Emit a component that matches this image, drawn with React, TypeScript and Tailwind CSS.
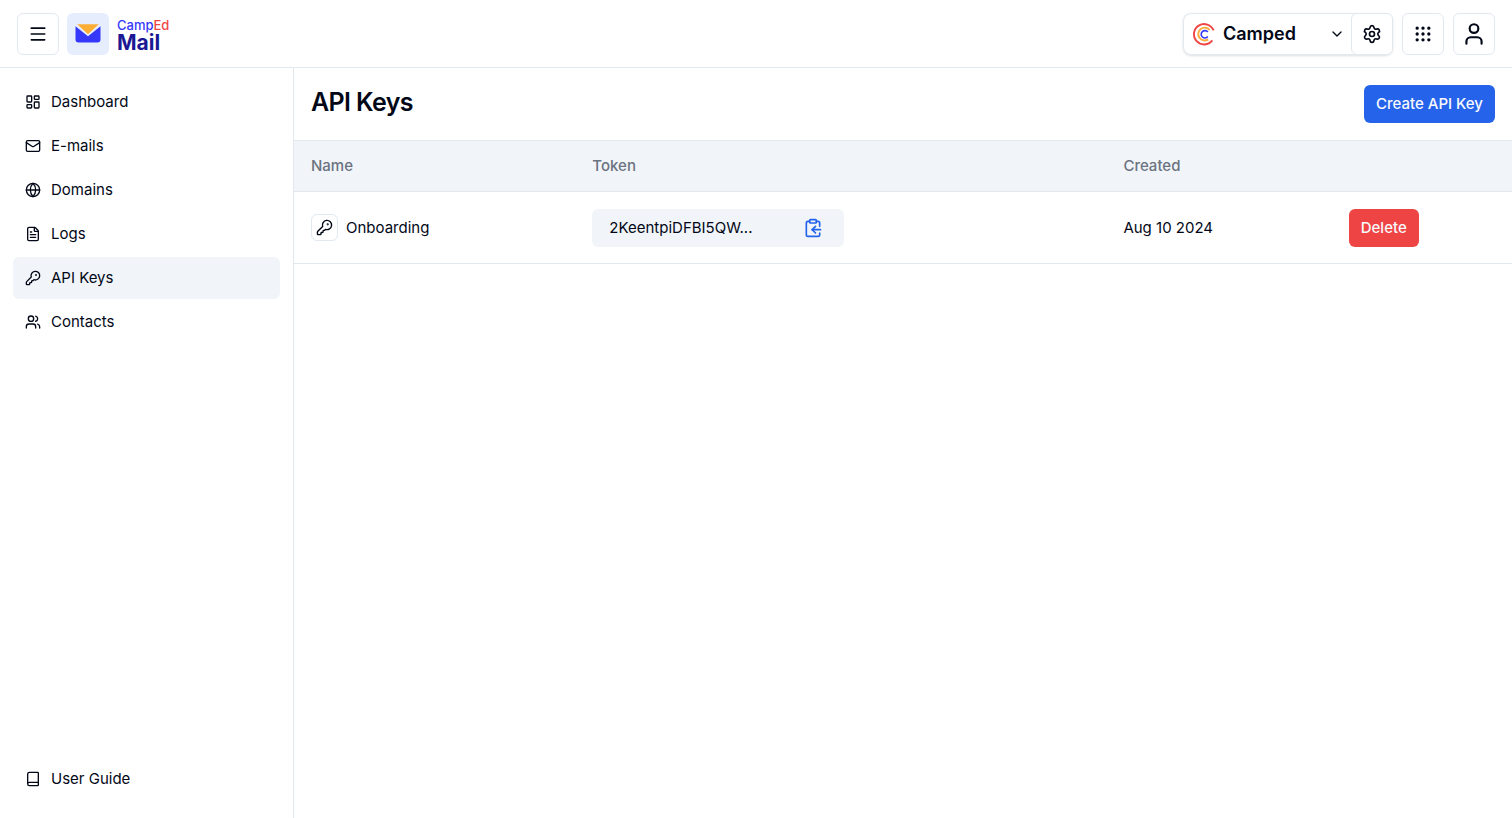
import {
  Book,
  ChevronDown,
  FileText,
  Globe,
  Grip,
  KeyRound,
  LayoutDashboard,
  Mail,
  Menu,
  Settings,
  User,
  Users,
} from "lucide-react";

const navItems = [
  { label: "Dashboard", icon: LayoutDashboard },
  { label: "E-mails", icon: Mail },
  { label: "Domains", icon: Globe },
  { label: "Logs", icon: FileText },
  { label: "API Keys", icon: KeyRound, active: true },
  { label: "Contacts", icon: Users },
];

const apiKeys = [
  { name: "Onboarding", token: "2KeentpiDFBI5QW...", created: "Aug 10 2024" },
];

const iconButton =
  "flex size-[42px] items-center justify-center rounded-md border border-[#e2e8f0] bg-white";

function MailLogo() {
  return (
    <svg viewBox="0 0 26 19" className="h-[19px] w-[26px]" aria-hidden="true">
      <path d="M0.5 2.2 L13 12.2 L25.5 2.2 V15.5 a3 3 0 0 1 -3 3 H3.5 A3 3 0 0 1 0.5 15.5 Z" fill="#3538fb" />
      <path d="M2.2 0.3 H23.8 L13 10.2 Z" fill="#ffae35" />
    </svg>
  );
}

function CampedLogo() {
  return (
    <svg viewBox="0 0 24 24" className="size-6" fill="none" aria-hidden="true">
      <path d="M21.6 8.4 A10.2 10.2 0 1 0 20.3 18.4" stroke="#ef4444" strokeWidth="1.9" />
      <path d="M17.6 8 A6.4 6.4 0 1 0 16.2 17.4" stroke="#fbab3c" strokeWidth="1.9" />
      <path d="M15.8 10 A3.7 3.7 0 1 0 15.8 14.6" stroke="#3538fb" strokeWidth="1.6" />
    </svg>
  );
}

function ClipboardIcon() {
  return (
    <svg
      viewBox="0 0 24 24"
      className="size-5"
      fill="none"
      stroke="currentColor"
      strokeWidth="2"
      strokeLinecap="round"
      strokeLinejoin="round"
      aria-hidden="true"
    >
      <rect width="8" height="4" x="8" y="2" rx="1" ry="1" />
      <path d="M8 4H6a2 2 0 0 0-2 2v14a2 2 0 0 0 2 2h12a2 2 0 0 0 2-2v-2" />
      <path d="M16 4h2a2 2 0 0 1 2 2v4" />
      <path d="M21 14H11" />
      <path d="m15 10-4 4 4 4" />
    </svg>
  );
}

function Header() {
  return (
    <header className="flex h-[68px] shrink-0 items-center justify-between border-b border-[#e2e8f0] px-[17px]">
      <div className="flex items-center gap-2">
        <button type="button" aria-label="Toggle menu" className={iconButton}>
          <Menu className="size-5" />
        </button>
        <a href="#" className="flex items-center gap-2">
          <span className="flex size-[42px] items-center justify-center rounded-md bg-[#e6edfd]">
            <MailLogo />
          </span>
          <span className="flex flex-col pt-[2px]">
            <span className="text-[13px] leading-4 font-medium text-[#3538fb]">
              Camp<span className="text-[#ef4444]">Ed</span>
            </span>
            <span className="text-[21px] leading-5 font-bold text-[#1a1894]">Mail</span>
          </span>
        </a>
      </div>

      <div className="flex items-center gap-[9px]">
        <div className="flex h-[42px] w-[210px] rounded-lg shadow-sm ring-1 ring-[#e2e8f0] ring-inset">
          <label className="relative flex min-w-0 flex-1 items-center pl-[9px]">
            <CampedLogo />
            <select
              aria-label="Organization"
              className="min-w-0 flex-1 appearance-none bg-transparent pl-[7px] text-[18px] font-semibold outline-none"
            >
              <option>Camped</option>
            </select>
            <ChevronDown className="pointer-events-none absolute right-[6px] size-4" />
          </label>
          <button type="button" aria-label="Settings" className={iconButton}>
            <Settings className="size-5" />
          </button>
        </div>
        <button type="button" aria-label="Apps" className={iconButton}>
          <Grip className="size-5" />
        </button>
        <button type="button" aria-label="Account" className={iconButton}>
          <User className="size-[26px]" />
        </button>
      </div>
    </header>
  );
}

function Sidebar() {
  return (
    <aside className="flex w-[294px] shrink-0 flex-col justify-between border-r border-[#e2e8f0] px-[13px] pt-[13px] pb-[18px]">
      <nav className="flex flex-col gap-[2px]">
        {navItems.map(({ label, icon: Icon, active }) => (
          <a
            key={label}
            href="#"
            className={`flex h-[42px] items-center gap-[10px] rounded-md px-3 ${active ? "bg-[#f1f5f9]" : ""}`}
          >
            <Icon className="size-4" />
            {label}
          </a>
        ))}
      </nav>
      <a href="#" className="flex h-[42px] items-center gap-[10px] rounded-md px-3">
        <Book className="size-4" />
        User Guide
      </a>
    </aside>
  );
}

function KeysTable() {
  return (
    <table className="w-full table-fixed text-left">
      <thead>
        <tr className="h-[51px] border-y border-[#e2e8f0] bg-[#f1f5f9] text-[#6b7280]">
          <th className="w-[23.1%] px-[17px] font-medium">Name</th>
          <th className="w-[43.6%] px-[17px] font-medium">Token</th>
          <th className="w-[18.5%] px-[17px] font-medium">Created</th>
          <th className="w-[14.8%] px-[17px]" aria-label="Actions" />
        </tr>
      </thead>
      <tbody>
        {apiKeys.map((key) => (
          <tr key={key.name} className="h-[72px] border-b border-[#e2e8f0]">
            <td className="px-[17px]">
              <div className="flex items-center gap-2">
                <span className="flex size-[27px] items-center justify-center rounded-md border border-[#e2e8f0]">
                  <KeyRound className="size-[17px]" />
                </span>
                {key.name}
              </div>
            </td>
            <td className="px-[17px]">
              <div className="flex h-[38px] w-[252px] items-center justify-between rounded-md bg-[#f1f5f9] pr-[21px] pl-[17px]">
                {key.token}
                <button type="button" aria-label="Copy token" className="text-[#2563eb]">
                  <ClipboardIcon />
                </button>
              </div>
            </td>
            <td className="px-[17px]">{key.created}</td>
            <td className="px-[17px]">
              <button
                type="button"
                className="h-[38px] rounded-md bg-[#ef4444] px-3 font-medium text-[#f8fafc]"
              >
                Delete
              </button>
            </td>
          </tr>
        ))}
      </tbody>
    </table>
  );
}

export default function App() {
  return (
    <div className="flex min-h-screen flex-col bg-white font-['Inter',sans-serif] text-[15px] leading-5 text-[#020817]">
      <Header />
      <div className="flex flex-1">
        <Sidebar />
        <main className="min-w-0 flex-1">
          <div className="flex h-[72px] items-center justify-between px-[17px]">
            <h1 className="pb-1 text-[25px] leading-8 font-semibold tracking-tight">API Keys</h1>
            <button
              type="button"
              className="h-[38px] rounded-md bg-[#2563eb] px-3 font-medium text-[#f8fafc]"
            >
              Create API Key
            </button>
          </div>
          <KeysTable />
        </main>
      </div>
    </div>
  );
}
